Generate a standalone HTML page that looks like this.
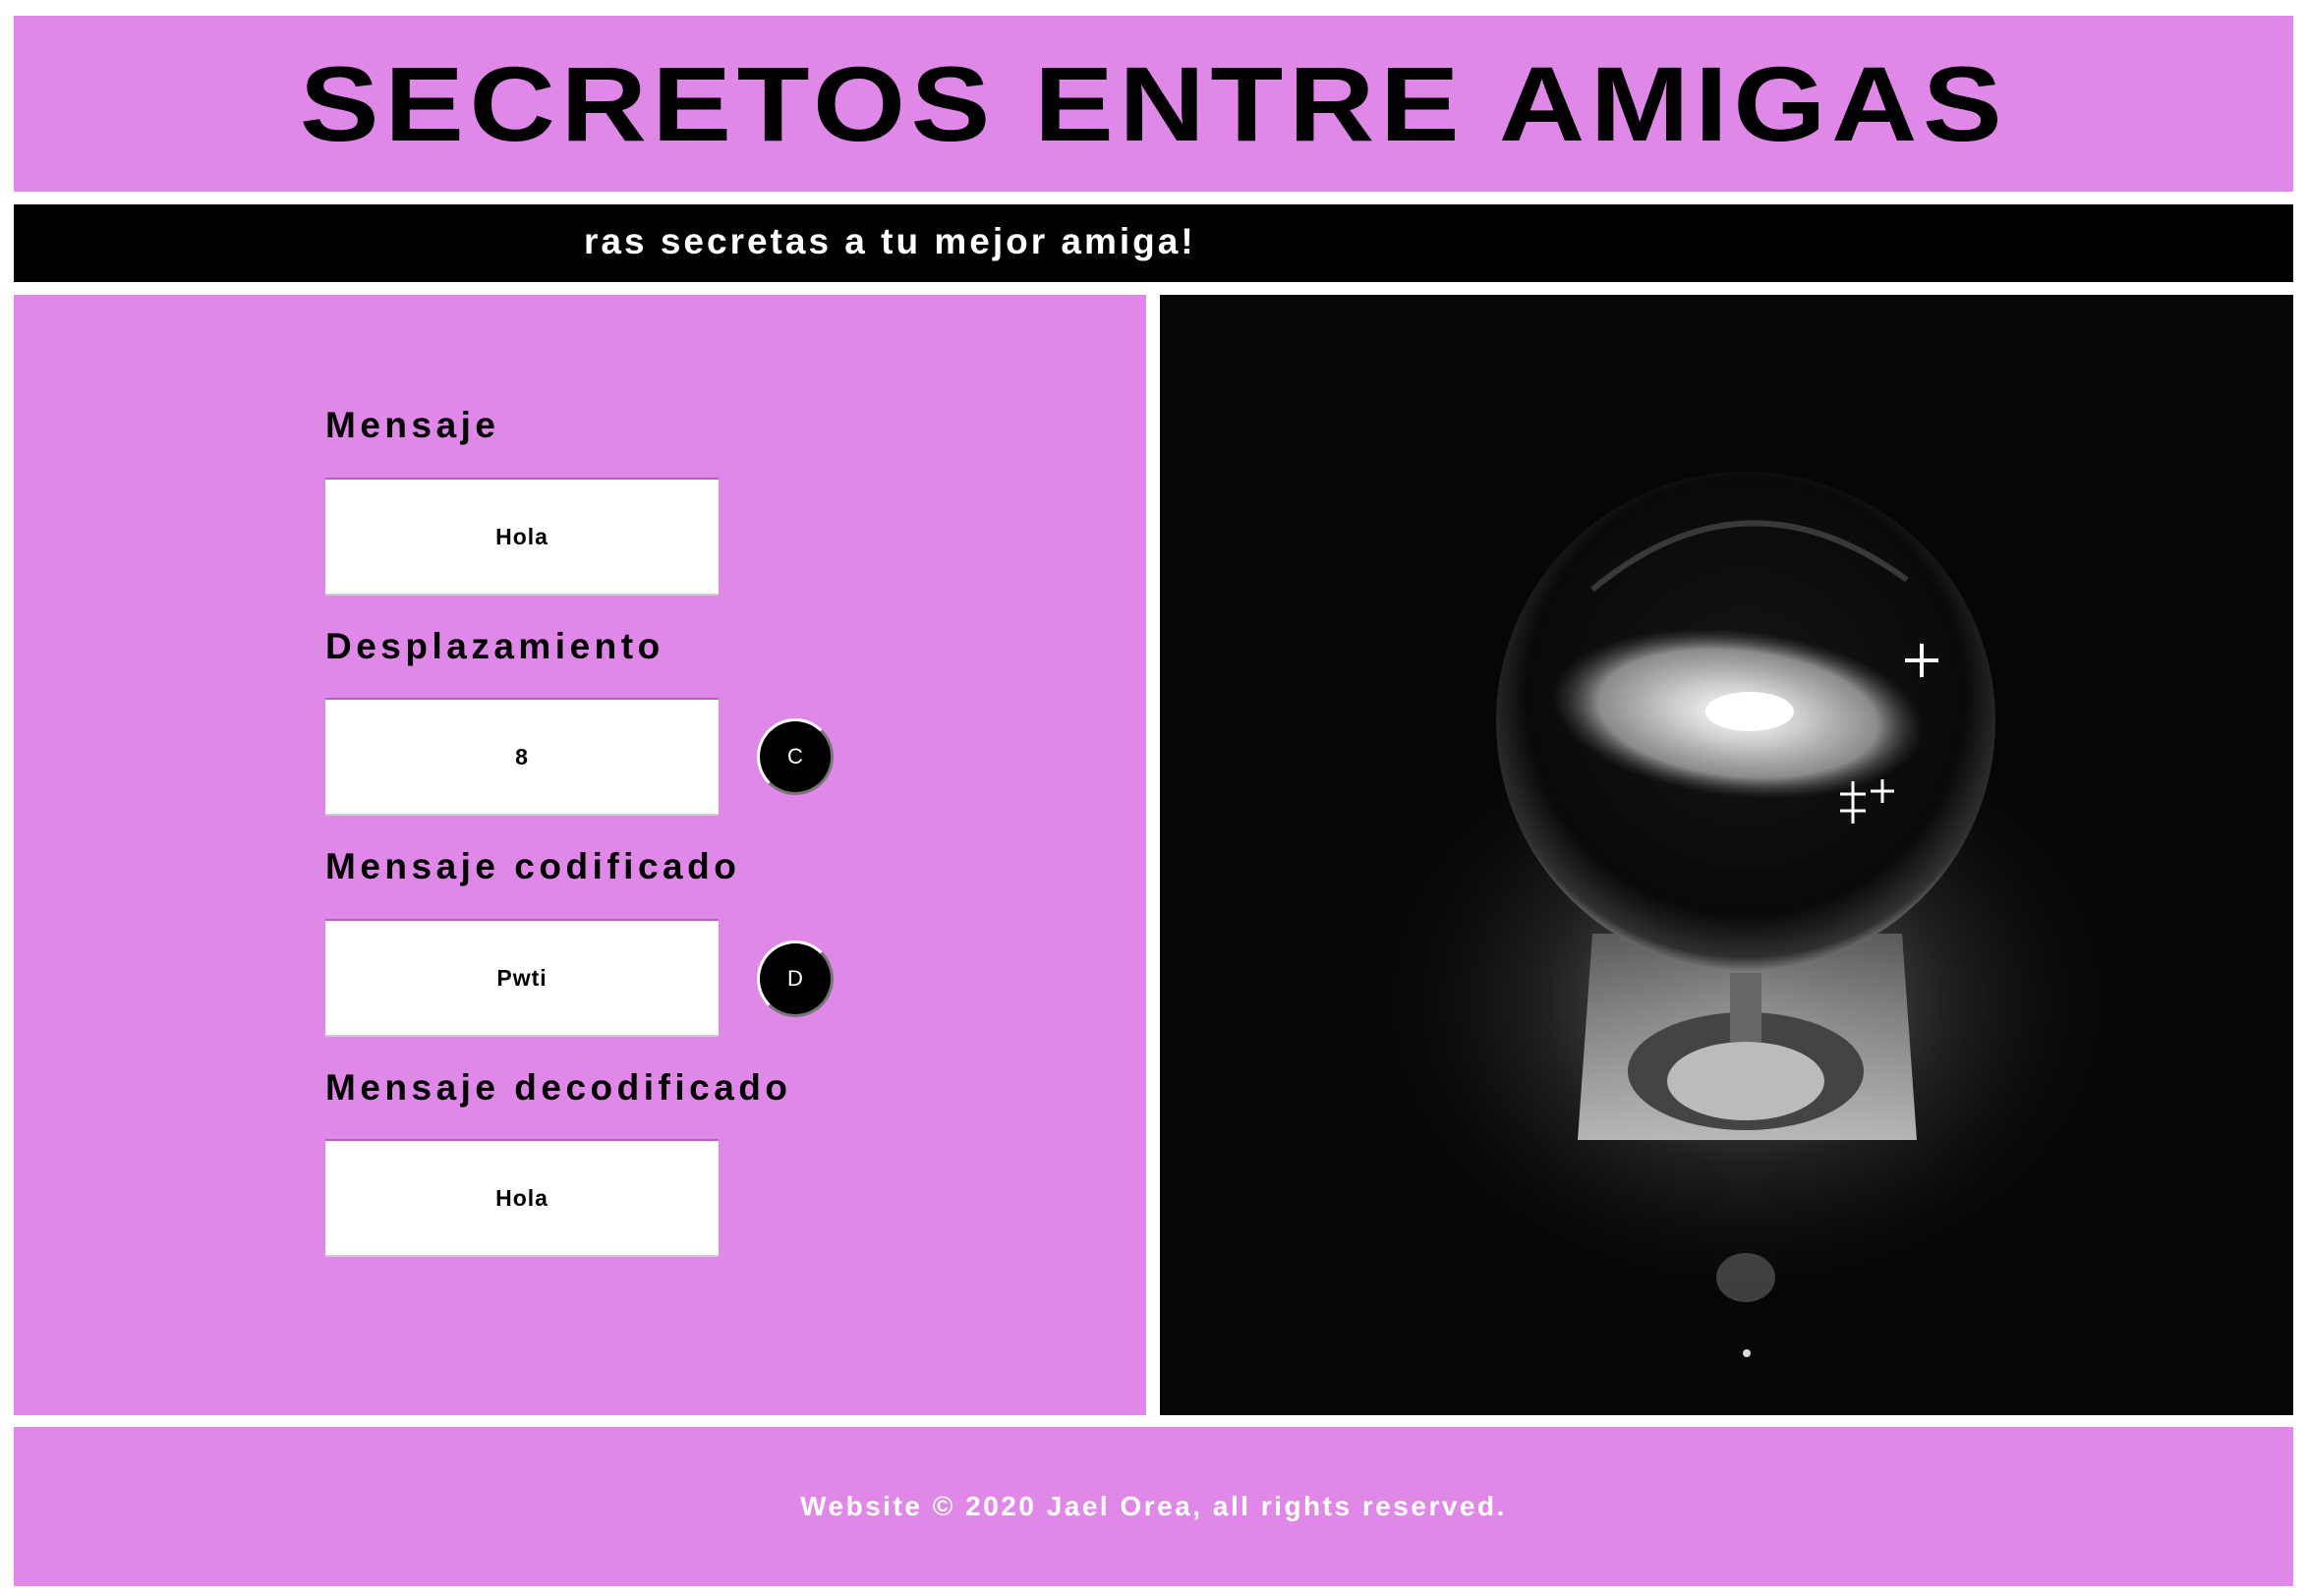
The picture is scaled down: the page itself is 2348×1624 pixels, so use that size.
<!DOCTYPE html>
<html><head><meta charset="utf-8"><style>
*{margin:0;padding:0;box-sizing:border-box}
body{width:2348px;height:1624px;background:#fff;position:relative;overflow:hidden;font-family:"Liberation Sans",sans-serif}
.pink{background:#df88e7;position:absolute}
#hdr{left:14px;top:16px;width:2319px;height:179px;display:flex;align-items:center;justify-content:center}
#hdr h1{font-size:108px;font-weight:bold;letter-spacing:5px;transform:scaleX(1.12);color:#000}
#bar{position:absolute;left:14px;top:208px;width:2319px;height:79px;background:#000;overflow:hidden}
#bar span{position:absolute;left:580px;top:17px;color:#fff;font-weight:bold;font-size:37px;letter-spacing:3px;white-space:nowrap}
#left{left:14px;top:300px;width:1152px;height:1140px}
.lbl{position:absolute;left:331px;font-weight:bold;font-size:37px;letter-spacing:4.5px;color:#000}
.inp{position:absolute;left:331px;width:400px;height:120px;background:#fff;border-top:2px solid #b560c0;border-bottom:2px solid #ccc;display:flex;align-items:center;justify-content:center;font-size:23px;font-weight:bold;letter-spacing:1px}
.btn{position:absolute;left:770px;width:78px;height:78px;border-radius:50%;background:#000;color:#fff;border:3px solid #fff;border-right-color:#777;border-bottom-color:#777;display:flex;align-items:center;justify-content:center;font-size:22px}
#img{position:absolute;left:1180px;top:300px;width:1153px;height:1140px;background:#060606}
#ftr{left:14px;top:1452px;width:2319px;height:162px;display:flex;align-items:center;justify-content:center;color:#fff;font-weight:bold;font-size:28px;letter-spacing:2.5px}
</style></head><body>
<div id="hdr" class="pink"><h1>SECRETOS ENTRE AMIGAS</h1></div>
<div id="bar"><span>ras secretas a tu mejor amiga!</span></div>
<div id="left" class="pink"></div>
<div class="lbl" style="top:412px">Mensaje</div>
<div class="inp" style="top:486px">Hola</div>
<div class="lbl" style="top:637px">Desplazamiento</div>
<div class="inp" style="top:710px">8</div>
<div class="btn" style="top:731px">C</div>
<div class="lbl" style="top:861px">Mensaje codificado</div>
<div class="inp" style="top:935px">Pwti</div>
<div class="btn" style="top:957px">D</div>
<div class="lbl" style="top:1086px">Mensaje decodificado</div>
<div class="inp" style="top:1159px">Hola</div>
<div id="img"><svg width="1153" height="1140" viewBox="0 0 1153 1140">
<defs>
<radialGradient id="glow" cx="0.5" cy="0.5" r="0.5"><stop offset="0" stop-color="#aaa" stop-opacity=".8"/><stop offset="0.5" stop-color="#444" stop-opacity=".4"/><stop offset="1" stop-color="#000" stop-opacity="0"/></radialGradient>
<radialGradient id="sph" cx="0.5" cy="0.45" r="0.55"><stop offset="0" stop-color="#151515"/><stop offset="0.8" stop-color="#0a0a0a"/><stop offset="0.95" stop-color="#303030"/><stop offset="1" stop-color="#777"/></radialGradient>
<radialGradient id="gal" cx="0.5" cy="0.5" r="0.5"><stop offset="0" stop-color="#fff"/><stop offset="0.35" stop-color="#ccc"/><stop offset="0.75" stop-color="#aaa" stop-opacity=".8"/><stop offset="1" stop-color="#555" stop-opacity="0"/></radialGradient>
<linearGradient id="base" x1="0" y1="0" x2="0" y2="1"><stop offset="0" stop-color="#666"/><stop offset="1" stop-color="#ddd"/></linearGradient>
</defs>
<ellipse cx="596" cy="720" rx="420" ry="330" fill="url(#glow)"/>
<path d="M440 650 L755 650 L770 860 L425 860 Z" fill="url(#base)" opacity=".8"/>
<ellipse cx="596" cy="790" rx="120" ry="60" fill="#444"/>
<ellipse cx="596" cy="800" rx="80" ry="40" fill="#bbb"/>
<rect x="580" y="690" width="32" height="70" fill="#666"/>
<circle cx="596" cy="434" r="254" fill="url(#sph)"/>
<path d="M440 300 Q596 170 760 290" stroke="#666" stroke-width="6" fill="none" opacity=".5"/>
<ellipse cx="588" cy="426" rx="190" ry="85" transform="rotate(6 588 426)" fill="url(#gal)"/>
<ellipse cx="600" cy="424" rx="45" ry="20" fill="#fff"/>
<g fill="#fff"><path d="M775 355 v34 M758 372 h34" stroke="#fff" stroke-width="4"/><path d="M705 495 v26 M692 508 h26 M735 493 v24 M723 505 h24 M705 512 v26 M692 525 h26" stroke="#fff" stroke-width="3"/></g>
<ellipse cx="596" cy="1000" rx="30" ry="25" fill="#777" opacity=".5"/>
<circle cx="597" cy="1077" r="4" fill="#ddd"/>
</svg></div>
<div id="ftr" class="pink">Website © 2020 Jael Orea, all rights reserved.</div>
</body></html>
